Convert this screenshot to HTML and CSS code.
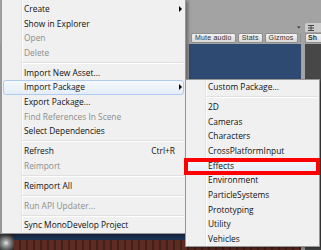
FILE: index.html
```html
<!DOCTYPE html>
<html>
	<head>
		<meta charset="UTF-8">
		<title>Project context menu</title>
		<link rel="stylesheet" href="styles.css">
	</head>
	<body>
		<div class="editor">
			<div class="scene-pane">
				<div class="pane-head">
					<svg class="pane-menu" width="10" height="5" viewBox="0 0 10 5">
						<path d="M0 1.5h3.5L1.75 3.5z" fill="#333"/>
						<path d="M4.5 0.5h5M4.5 2.5h5M4.5 4.5h5" stroke="#333" stroke-width="1"/>
					</svg>
				</div>
				<div class="scene-bar">
					<span class="tb-btn">Mute audio</span>
					<span class="tb-btn">Stats</span>
					<span class="tb-btn">Gizmos</span>
					<span class="tb-btn tb-drop"></span>
				</div>
				<div class="scene-view">
					<div class="view-left"></div>
					<div class="view-sky"></div>
					<div class="view-ground">
						<div class="sphere"></div>
						<div class="ground-far"></div>
						<div class="ground-near"></div>
					</div>
				</div>
			</div>
			<div class="split"></div>
			<div class="side-pane">
				<div class="side-top"></div>
				<div class="side-tab">
					<svg width="8" height="6" viewBox="0 0 8 6">
						<path d="M0 0.5h6M0 3h6M0 5.5h6M3 0v6" stroke="#444" stroke-width="1"/>
					</svg>
				</div>
				<div class="side-bar"><span class="tb-btn side-btn">Sh</span></div>
				<div class="side-body"></div>
			</div>
		</div>

		<div class="menu main-menu">
			<div class="item sub">Create</div>
			<div class="item">Show in Explorer</div>
			<div class="item off">Open</div>
			<div class="item off">Delete</div>
			<div class="sep"></div>
			<div class="item">Import New Asset...</div>
			<div class="item sub hot">Import Package</div>
			<div class="item">Export Package...</div>
			<div class="item off">Find References In Scene</div>
			<div class="item">Select Dependencies</div>
			<div class="sep"></div>
			<div class="item">Refresh<span class="key">Ctrl+R</span></div>
			<div class="item off">Reimport</div>
			<div class="sep"></div>
			<div class="item">Reimport All</div>
			<div class="sep"></div>
			<div class="item off">Run API Updater...</div>
			<div class="sep"></div>
			<div class="item">Sync MonoDevelop Project</div>
		</div>

		<div class="menu sub-menu">
			<div class="item">Custom Package...</div>
			<div class="sep"></div>
			<div class="item">2D</div>
			<div class="item">Cameras</div>
			<div class="item">Characters</div>
			<div class="item">CrossPlatformInput</div>
			<div class="item hot">Effects</div>
			<div class="item">Environment</div>
			<div class="item">ParticleSystems</div>
			<div class="item">Prototyping</div>
			<div class="item">Utility</div>
			<div class="item">Vehicles</div>
		</div>

		<div class="mark"></div>
	</body>
</html>
```

FILE: styles.css
```css
body { margin: 0; width: 321px; height: 250px; overflow: hidden; position: relative; background: #a3a3a3; font-family: 'Open Sans', sans-serif; }

/* editor behind the menus */
.editor { display: grid; grid-template-columns: 301px 4px 16px; height: 250px; }
.scene-pane { display: grid; grid-template-rows: 32px 12px 1fr; }
.pane-head { background: #a3a3a3; display: flex; justify-content: flex-end; align-items: flex-end; padding: 0 1px 2px 0; }
.scene-bar { display: flex; align-items: center; gap: 2px; padding-left: 191px; background: #a3a3a3; }
.tb-btn { height: 10px; box-sizing: border-box; padding: 0 3px; border: 1px solid #8e8e8e; border-radius: 2px; background: linear-gradient(#f2f2f2, #dadada); font: 7px/8px 'Liberation Sans', sans-serif; letter-spacing: .2px; color: #333; white-space: nowrap; }
.tb-drop { width: 8px; padding: 0; display: flex; justify-content: center; align-items: center; }
.tb-drop::after { content: ''; border-top: 2px solid #555; border-left: 2px solid transparent; border-right: 2px solid transparent; }

.scene-view { display: grid; grid-template-columns: 189px 1fr; grid-template-rows: 1fr 6px 10px; }
.view-left { background: #9a9a9a; }
.view-sky { background: #2e4a72; }
.view-ground { grid-column: 1 / 3; grid-row: 2 / 4; display: grid; grid-template-columns: 14px 1fr; grid-template-rows: 6px 10px; }
.sphere { grid-row: 1 / 3; background: radial-gradient(circle at 6px 9px, #e6e6e6 0, #9a9a9a 3px, #555 7px, #2a2a2a 10px, #4a231c 11px); }
.ground-far { background: #1c3052; }
.ground-near { background: repeating-linear-gradient(90deg, #5e2b22 0 5px, #43201a 5px 7px); }

.split { background: #a3a3a3; }
.side-pane { display: grid; grid-template-rows: 23px 9px 12px 1fr; }
.side-top { background: #a3a3a3; }
.side-tab { background: #cbcbcb; border-radius: 2px 0 0 0; display: flex; align-items: center; padding-left: 3px; }
.side-bar { background: #a3a3a3; display: flex; align-items: center; }
.side-btn { border-right: none; border-radius: 2px 0 0 2px; padding: 0 2px; flex: 1; font-weight: bold; }
.side-body { background: #474747; }

/* context menus */
.menu { position: absolute; box-sizing: border-box; border: 1px solid #979797; padding: 0 1px; background-color: #f0f0f0; background-image: linear-gradient(to right, transparent 19px, #e2e3e3 19px, #e2e3e3 20px, #fff 20px, #fff 21px, transparent 21px); box-shadow: 2px 2px 3px rgba(0,0,0,.35); font-size: 8.4px; color: #111; }
.main-menu { left: 1px; top: -1px; width: 185px; padding-top: 1.65px; padding-bottom: 0.5px; }
.sub-menu { left: 185px; top: 79px; width: 135px; }
.item { height: 14.67px; box-sizing: border-box; border: 1px solid transparent; border-radius: 3px; display: flex; align-items: center; padding: 0 1px 0 20px; line-height: 12px; white-space: nowrap; }
.item.off { color: #8d8d8d; }
.item.hot { border-color: #aecbee; background: linear-gradient(#f6f9fd, #e4edf9); }
.item.sub::after { content: ''; margin-left: auto; border-left: 3px solid #000; border-top: 3px solid transparent; border-bottom: 3px solid transparent; }
.key { margin-left: auto; margin-right: 7px; }
.sep { height: 0; margin: 1.6px 0 1.6px 19px; border-top: 1px solid #e0e0e0; border-bottom: 1px solid #fff; }

/* annotation */
.mark { position: absolute; left: 184px; top: 158px; width: 136px; height: 17px; box-sizing: border-box; border: 4px solid #ff0000; }
```
